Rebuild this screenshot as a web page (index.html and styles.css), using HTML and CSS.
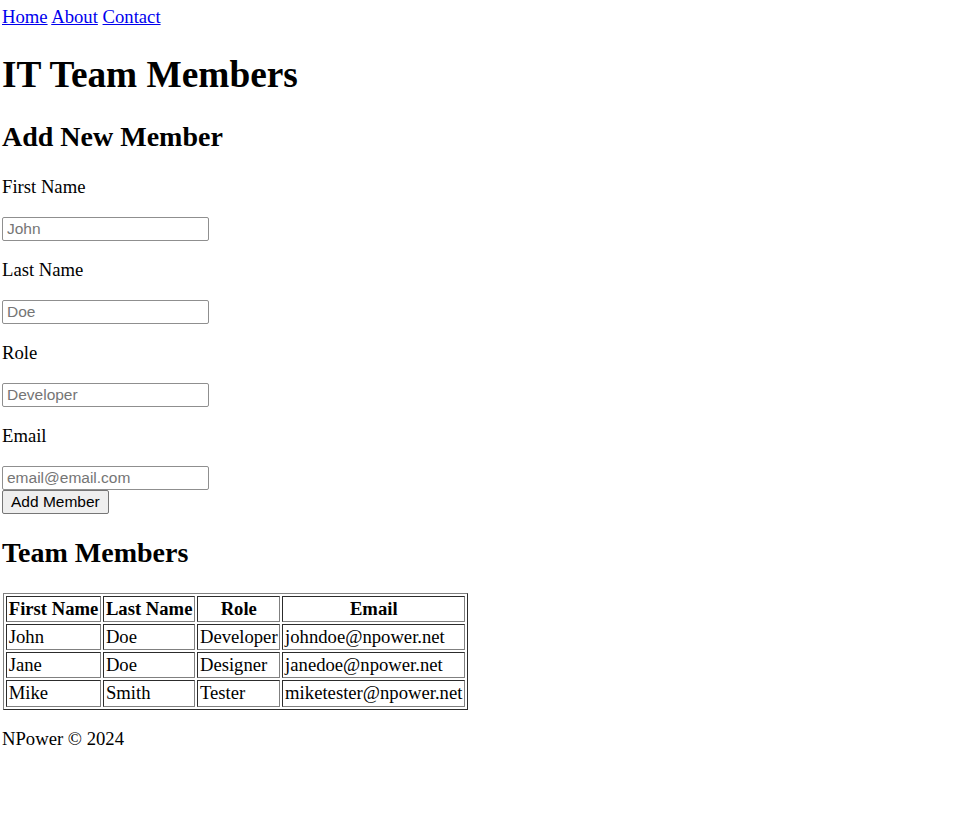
FILE: index.html
```html
<!DOCTYPE html>
<html>
<head>
<meta charset="utf-8">
<title>IT Team Members</title>
<link rel="stylesheet" href="styles.css">
</head>
<body>
<nav class="nav"><a href="#">Home</a> <a href="#">About</a> <a href="#">Contact</a></nav>
<h1 class="title">IT Team Members</h1>
<h2 class="subtitle">Add New Member</h2>
<form class="form">
  <p class="label">First Name</p>
  <input class="field" type="text" placeholder="John">
  <p class="label">Last Name</p>
  <input class="field" type="text" placeholder="Doe">
  <p class="label">Role</p>
  <input class="field" type="text" placeholder="Developer">
  <p class="label">Email</p>
  <input class="field" type="text" placeholder="email@email.com">
  <button class="btn" type="button">Add Member</button>
</form>
<h2 class="subtitle subtitle-table">Team Members</h2>
<table class="members">
  <tr><th>First Name</th><th>Last Name</th><th>Role</th><th>Email</th></tr>
  <tr><td>John</td><td>Doe</td><td>Developer</td><td>johndoe@npower.net</td></tr>
  <tr><td>Jane</td><td>Doe</td><td>Designer</td><td>janedoe@npower.net</td></tr>
  <tr><td>Mike</td><td>Smith</td><td>Tester</td><td>miketester@npower.net</td></tr>
</table>
<p class="footer">NPower © 2024</p>
</body>
</html>
```
FILE: styles.css
```css
body {
  margin: 6px 2px;
  font-family: "Liberation Serif", "Times New Roman", serif;
  font-size: 18.67px;
  color: #000;
}
.nav a { color: #0000ee; }
.title {
  font-size: 37.33px;
  margin: 25px 0;
}
.subtitle {
  font-size: 28px;
  margin: 23px 0;
}
.subtitle-table { margin-bottom: 24px; }
.form { margin: 0; }
.label { margin: 18.5px 0; }
.field {
  display: block;
  box-sizing: border-box;
  width: 207px;
  height: 24px;
  margin: 0;
  padding: 1px 4px;
  border: 1px solid #8f8f8f;
  border-radius: 2px;
  font-family: "Liberation Sans", Arial, sans-serif;
  font-size: 15.5px;
}
.field::placeholder { color: #757575; }
.btn {
  display: block;
  margin: 0;
  height: 24px;
  padding: 1px 8px;
  border: 1px solid #767676;
  border-radius: 2px;
  background: #efefef;
  font-family: "Liberation Sans", Arial, sans-serif;
  font-size: 15.5px;
  color: #000;
}
.members {
  border: 1px outset #808080;
  border-spacing: 2px;
  margin-left: 1px;
}
.members th, .members td {
  border: 1px inset #808080;
  padding: 1px 1.75px;
  line-height: 22.25px;
}
.footer { margin: 18.67px 0; }
```
